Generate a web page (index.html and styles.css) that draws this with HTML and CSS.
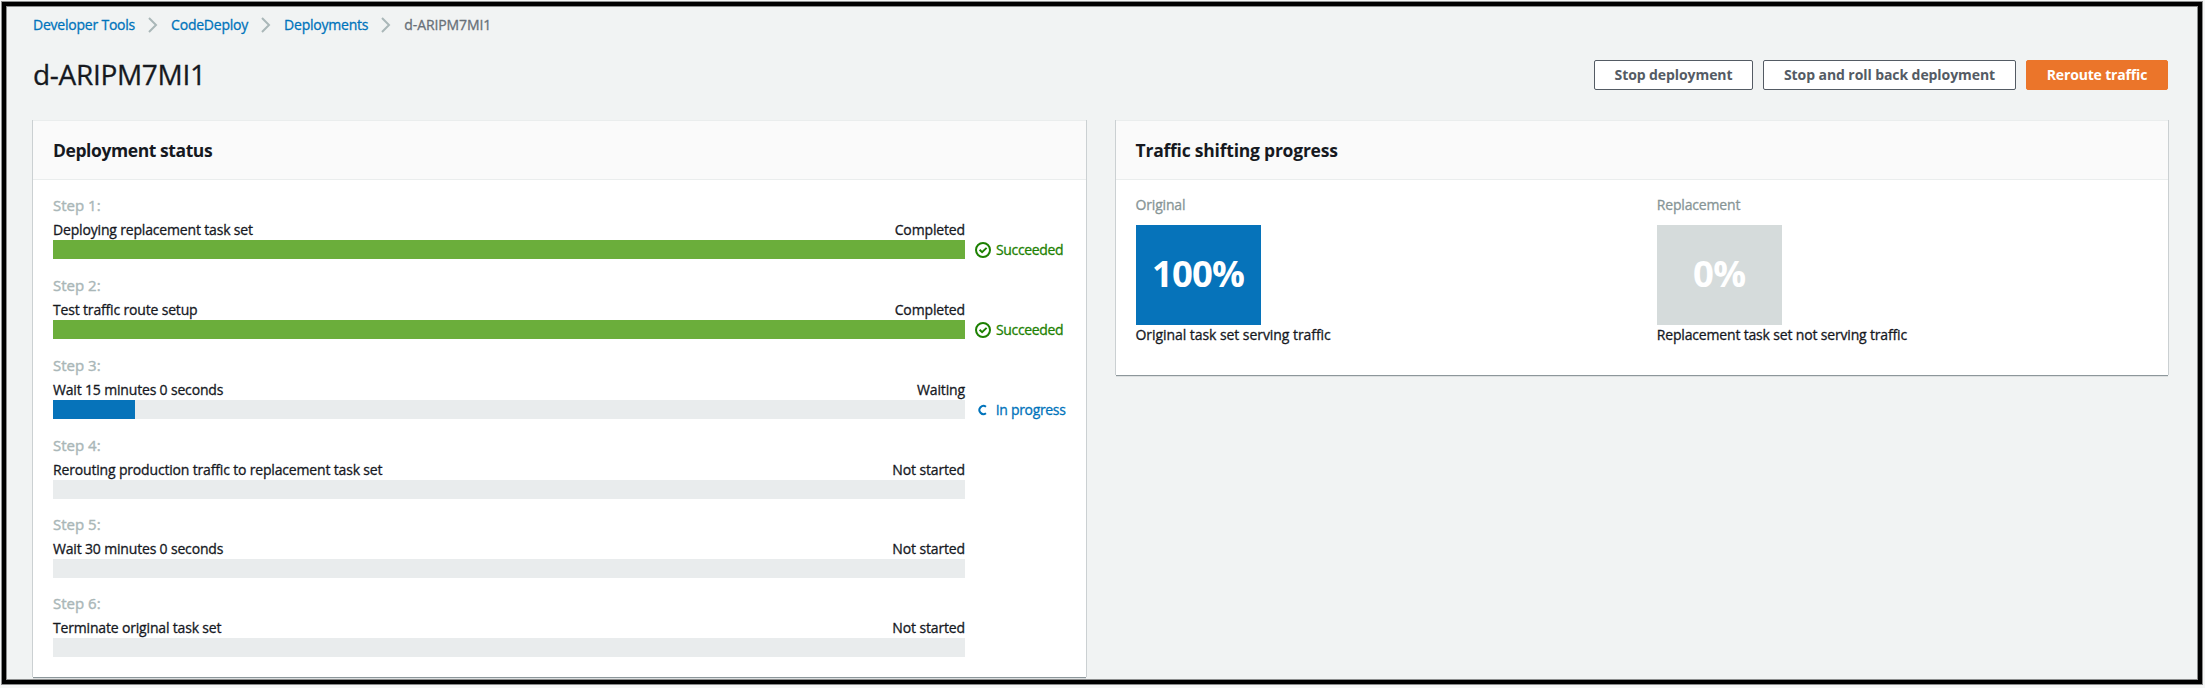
FILE: index.html
```html
<!DOCTYPE html>
<html lang="en">
<head>
<meta charset="utf-8">
<title>d-ARIPM7MI1</title>
<link rel="stylesheet" href="styles.css">
</head>
<body>
<svg class="defs" aria-hidden="true">
  <symbol id="chevron" viewBox="0 0 10 16"><path d="M1 1l7 7-7 7" fill="none" stroke="currentColor" stroke-width="2"/></symbol>
  <symbol id="check" viewBox="0 0 16 16"><circle cx="8" cy="8" r="7" fill="none" stroke="currentColor" stroke-width="2"/><path d="M4.6 7.8l2.5 2.4 4.5-4.3" fill="none" stroke="currentColor" stroke-width="2"/></symbol>
</svg>
<div class="frame">
  <nav class="crumbs">
    <a class="crumb crumb-tools">Developer Tools</a><svg class="chevron"><use href="#chevron"/></svg>
    <a class="crumb crumb-deploy">CodeDeploy</a><svg class="chevron"><use href="#chevron"/></svg>
    <a class="crumb crumb-list">Deployments</a><svg class="chevron"><use href="#chevron"/></svg>
    <span class="crumb-current">d-ARIPM7MI1</span>
  </nav>
  <header class="page-head">
    <h1 class="title">d-ARIPM7MI1</h1>
    <div class="actions">
      <button class="btn btn-stop">Stop deployment</button>
      <button class="btn btn-rollback">Stop and roll back deployment</button>
      <button class="btn btn-primary">Reroute traffic</button>
    </div>
  </header>
  <main class="panels">
    <section class="panel">
      <h2 class="panel-head head-status">Deployment status</h2>
      <div class="steps">
        <div class="step">
          <div class="step-label">Step 1:</div>
          <div class="step-row"><span>Deploying replacement task set</span><span class="state">Completed</span></div>
          <div class="bar-row"><div class="bar"><div class="fill done" style="width:100%"></div></div><div class="status ok"><svg class="check"><use href="#check"/></svg><span>Succeeded</span></div></div>
        </div>
        <div class="step">
          <div class="step-label">Step 2:</div>
          <div class="step-row"><span>Test traffic route setup</span><span class="state">Completed</span></div>
          <div class="bar-row"><div class="bar"><div class="fill done" style="width:100%"></div></div><div class="status ok"><svg class="check"><use href="#check"/></svg><span>Succeeded</span></div></div>
        </div>
        <div class="step">
          <div class="step-label">Step 3:</div>
          <div class="step-row"><span>Wait 15 minutes 0 seconds</span><span class="state">Waiting</span></div>
          <div class="bar-row"><div class="bar"><div class="fill" style="width:9%"></div></div><div class="status busy"><svg class="spinner" viewBox="0 0 16 16"><path d="M11 4.7A4.1 4.1 0 1 0 11 11.3" fill="none" stroke="currentColor" stroke-width="2"/></svg><span>In progress</span></div></div>
        </div>
        <div class="step">
          <div class="step-label">Step 4:</div>
          <div class="step-row"><span>Rerouting production traffic to replacement task set</span><span class="state">Not started</span></div>
          <div class="bar-row"><div class="bar"></div></div>
        </div>
        <div class="step">
          <div class="step-label">Step 5:</div>
          <div class="step-row"><span>Wait 30 minutes 0 seconds</span><span class="state">Not started</span></div>
          <div class="bar-row"><div class="bar"></div></div>
        </div>
        <div class="step">
          <div class="step-label">Step 6:</div>
          <div class="step-row"><span>Terminate original task set</span><span class="state">Not started</span></div>
          <div class="bar-row"><div class="bar"></div></div>
        </div>
      </div>
    </section>
    <section class="panel">
      <h2 class="panel-head head-traffic">Traffic shifting progress</h2>
      <div class="traffic">
        <div>
          <div class="traffic-label">Original</div>
          <div class="tile tile-full">100%</div>
          <div class="traffic-note note-original">Original task set serving traffic</div>
        </div>
        <div>
          <div class="traffic-label">Replacement</div>
          <div class="tile tile-empty">0%</div>
          <div class="traffic-note">Replacement task set not serving traffic</div>
        </div>
      </div>
    </section>
  </main>
</div>
</body>
</html>
```
FILE: styles.css
```css
* { box-sizing: border-box; }
body {
  margin: 0;
  padding: 2px 3px 4px 2px;
  background: #f6f7f7;
  font: 14px/20px "Open Sans", "Noto Sans", sans-serif;
  letter-spacing: -0.17px;
  color: #16191f;
  -webkit-text-stroke: 0.3px;
}
.defs { display: none; }
.frame {
  width: 2200px;
  height: 682px;
  overflow: hidden;
  padding: 9px 30px 0 25px;
  border: 4px solid #000;
  outline: 1px solid #8c8d8d;
  box-shadow: inset 0 0 0 1px #8c8d8d;
  background: #f1f3f3;
}
.crumbs { display: flex; align-items: center; height: 20px; margin: 0 0 24px 2px; }
.crumb { color: #0073bb; letter-spacing: -0.22px; }
.crumb-current { color: #687078; letter-spacing: -0.1px; }
.chevron { width: 10px; height: 16px; margin: 0 13px 0 13px; color: #aab7b8; }
.page-head { display: flex; justify-content: space-between; align-items: center; height: 32px; margin-bottom: 29px; padding-left: 2px; }
.title { margin: 0; padding-bottom: 2px; font-size: 28px; line-height: 30px; font-weight: 400; letter-spacing: -0.3px; }
.actions { display: flex; gap: 10px; }
.btn {
  height: 30px;
  padding: 0;
  border: 1px solid #545b64;
  border-radius: 2px;
  background: #fff;
  color: #545b64;
  font: 700 14px/28px "Open Sans", "Noto Sans", sans-serif;
  letter-spacing: -0.08px;
  -webkit-text-stroke: 0;
}
.btn-stop { width: 159px; }
.btn-rollback { width: 253px; }
.btn-primary { width: 142px; border-color: #eb752a; background: #eb752a; color: #fff; letter-spacing: -0.17px; }
.panels { display: grid; grid-template-columns: 1fr 1fr; gap: 30px; align-items: start; padding-left: 2px; }
.panel {
  border-top: 1px solid #eaeded;
  background: #fff;
  box-shadow: 0 1px 0 #8d979b, -1px 0 0 #cbd0d2, 1px 0 0 #cbd0d2, 0 2px 0 #dde0e1;
}
.panel-head {
  height: 59px;
  margin: 0;
  padding: 0 20px;
  border-bottom: 1px solid #eaeded;
  background: #fafafa;
  font-size: 17.5px;
  line-height: 58px;
  font-weight: 700;
  -webkit-text-stroke: 0;
}
.head-status { letter-spacing: -0.42px; }
.head-traffic { letter-spacing: -0.22px; }
.steps { display: grid; gap: 16px; padding: 16px 20px 20px; }
.step-label { padding-bottom: 6px; color: #aab7b8; font-size: 15px; line-height: 18px; letter-spacing: 0; -webkit-text-stroke: 0.4px; }
.step-row { display: flex; justify-content: space-between; width: 912px; }
.state { letter-spacing: -0.14px; }
.bar-row { display: flex; gap: 10px; }
.bar { width: 912px; height: 19px; background: #e9eced; }
.fill { height: 19px; background: #0673ba; }
.done { background: #6bae3b; }
.status { display: flex; align-items: center; gap: 5px; height: 20px; letter-spacing: -0.35px; }
.ok { color: #1d8102; }
.busy { color: #0073bb; letter-spacing: -0.33px; }
.check, .spinner { width: 16px; height: 16px; }
.traffic { display: grid; grid-template-columns: 1fr 1fr; gap: 30px; padding: 15px 20px 30px; }
.traffic-label { margin-bottom: 10px; color: #879596; }
.tile {
  width: 125px;
  height: 100px;
  color: #fff;
  font-size: 36.5px;
  line-height: 97px;
  font-weight: 700;
  text-align: center;
  letter-spacing: -0.9px;
  -webkit-text-stroke: 0;
}
.tile-full { background: #0673ba; }
.tile-empty { background: #d5dbdb; letter-spacing: -0.6px; }
.note-original { letter-spacing: -0.06px; }
```
